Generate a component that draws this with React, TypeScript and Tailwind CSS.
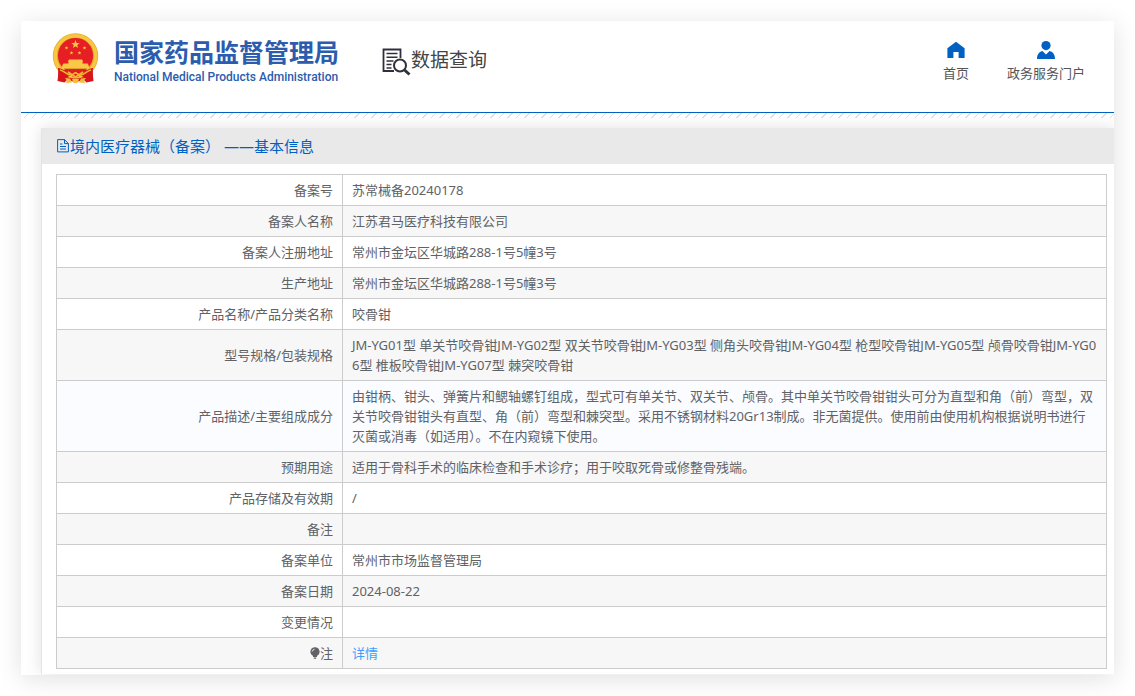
import type { ReactNode } from "react";

type Row = { label: ReactNode; value: ReactNode; tone: string };

const PLAIN = "bg-white";
const STRIPE = "bg-[#f7f7f7]";

const rows: Row[] = [
  { label: "备案号", value: "苏常械备20240178", tone: PLAIN },
  { label: "备案人名称", value: "江苏君马医疗科技有限公司", tone: STRIPE },
  { label: "备案人注册地址", value: "常州市金坛区华城路288-1号5幢3号", tone: PLAIN },
  { label: "生产地址", value: "常州市金坛区华城路288-1号5幢3号", tone: STRIPE },
  { label: "产品名称/产品分类名称", value: "咬骨钳", tone: PLAIN },
  {
    label: "型号规格/包装规格",
    value:
      "JM-YG01型 单关节咬骨钳JM-YG02型 双关节咬骨钳JM-YG03型 侧角头咬骨钳JM-YG04型 枪型咬骨钳JM-YG05型 颅骨咬骨钳JM-YG06型 椎板咬骨钳JM-YG07型 棘突咬骨钳",
    tone: STRIPE,
  },
  {
    label: "产品描述/主要组成成分",
    value:
      "由钳柄、钳头、弹簧片和鳃轴螺钉组成，型式可有单关节、双关节、颅骨。其中单关节咬骨钳钳头可分为直型和角（前）弯型，双关节咬骨钳钳头有直型、角（前）弯型和棘突型。采用不锈钢材料20Gr13制成。非无菌提供。使用前由使用机构根据说明书进行灭菌或消毒（如适用）。不在内窥镜下使用。",
    tone: "bg-[#fafcff]",
  },
  { label: "预期用途", value: "适用于骨科手术的临床检查和手术诊疗；用于咬取死骨或修整骨残端。", tone: STRIPE },
  { label: "产品存储及有效期", value: "/", tone: PLAIN },
  { label: "备注", value: "", tone: STRIPE },
  { label: "备案单位", value: "常州市市场监督管理局", tone: PLAIN },
  { label: "备案日期", value: "2024-08-22", tone: STRIPE },
  { label: "变更情况", value: "", tone: PLAIN },
  {
    label: (
      <span className="inline-flex items-center align-top">
        <BulbIcon />注
      </span>
    ),
    value: (
      <a href="#detail" className="text-[#409eff]">
        详情
      </a>
    ),
    tone: STRIPE,
  },
];

const STAR = "M0-5 1.2-1.6 4.8-1.5 1.9.6 2.9 4 0 2-2.9 4-1.9.6-4.8-1.5-1.2-1.6Z";

function Emblem() {
  return (
    <svg viewBox="0 0 47 51" className="h-[51px] w-[47px]" aria-hidden="true">
      <path d="M7 34 5.5 48l7 1.5 3-3 8 3 8-3 3 3 7-1.5L40 34Z" fill="#d8151b" />
      <circle cx="23.5" cy="23" r="22.7" fill="#e8a823" />
      <circle cx="23.5" cy="23" r="20.3" fill="none" stroke="#f5c843" strokeWidth="3.4" />
      <circle cx="23.5" cy="22.5" r="17.6" fill="#e71f24" />
      <g fill="#f9c846">
        <path d={STAR} transform="translate(23.5 11.5) scale(.88)" />
        <path d={STAR} transform="translate(14.5 15) scale(.4)" />
        <path d={STAR} transform="translate(32.5 15) scale(.4)" />
        <path d={STAR} transform="translate(19.5 20) scale(.4)" />
        <path d={STAR} transform="translate(27.5 20) scale(.4)" />
        <path d="M17 26.5h13l1.3 2.2H15.7ZM16.5 28.7h14v2.500h-14ZM10.5 32l1-1.500h24l1 1.500 1 4h-28Z" />
      </g>
      <path d="M12 35.5h23" stroke="#dc8f20" strokeWidth=".7" />
      <path d="M10 37h27l-5 4H15Z" fill="#e02020" />
      <path d="M6 35c5 0 8 6 13 5l4.5-2.500L28 40c5 1 8-5 13-5l-.5 9-6.500 1.500-5-3-5.500 2-5.500-2-5 3L6.500 44Z" fill="#d8151b" />
      <path d="M8 37c5 1 7 6 12 5l3.500-2.500L27 42c5 1 7-4 12-5M16 39l7.500 5 7.500-5" fill="none" stroke="#f0b62f" strokeWidth="1.6" />
      <path d="m13 45 5 .5 2 4-6 .5 1-2.500ZM34 45l-5 .5-2 4 6 .5-1-2.500ZM20 46h7l-1.500 4h-4Z" fill="#f3be3a" />
    </svg>
  );
}

function QueryIcon() {
  return (
    <svg viewBox="0 0 29 28" className="h-7 w-[29px] shrink-0" fill="none" stroke="#30303c" aria-hidden="true">
      <path d="M12 23H1.500V1.500h17V10" strokeWidth="1.8" />
      <path d="M4.500 5.500h11M4.500 9.200h11M4.500 13h7M4.500 16.600h5M4.500 20h5" strokeWidth="1.5" />
      <circle cx="18" cy="17.5" r="6" strokeWidth="2" />
      <path d="m22.500 22 5 4.500" strokeWidth="3" />
    </svg>
  );
}

function HomeIcon() {
  return (
    <svg viewBox="0 0 18 18" className="size-[18px]" fill="#0061c2" aria-hidden="true">
      <path d="M9 .8.400 7.200V17h6v-6h5.200v6h6V7.200Z" />
    </svg>
  );
}

function UserIcon() {
  return (
    <svg viewBox="0 0 18 18" className="size-[18px]" fill="#0061c2" aria-hidden="true">
      <circle cx="9" cy="4.6" r="4.6" />
      <path d="M0 18c0-4 1.500-7 5.500-8L9 13.500 12.500 10c4 1 5.500 4 5.500 8Z" />
    </svg>
  );
}

function DocIcon() {
  return (
    <svg viewBox="0 0 12 14" className="h-3.5 w-3 shrink-0" fill="none" stroke="#0061c2" aria-hidden="true">
      <path d="M.6.600H7.500l3.900 4v8.300H.6ZM7.500.600v4h3.900M3 5h2.500M3 7.500h6M3 10h6" />
    </svg>
  );
}

function BulbIcon() {
  return (
    <svg viewBox="0 0 10 12" className="h-3 w-2.5" aria-hidden="true">
      <circle cx="5" cy="4.8" r="4.6" fill="#606266" />
      <path d="M3 9h4v1H3ZM3.800 10.600h2.400v1.200H3.800Z" fill="#606266" />
      <path d="M2.200 4.500a3 3 0 0 1 2.300-2.300" fill="none" stroke="#e8e8e8" />
    </svg>
  );
}

function NavLink({ href, icon, children }: { href: string; icon: ReactNode; children: ReactNode }) {
  return (
    <a href={href} className="flex flex-col items-center gap-1 text-[13px] leading-5 text-[#555]">
      {icon}
      {children}
    </a>
  );
}

export default function App() {
  return (
    <div className="bg-white p-[21px] font-['Noto_Sans','Noto_Sans_CJK_SC',sans-serif] text-[#606266]">
      <div className="overflow-hidden bg-white pb-px shadow-[0_4px_24px_rgba(0,0,0,0.12)]">
        <header className="flex items-start justify-between pr-[29px] pb-[25px] pl-[31px]">
          <div className="flex items-start pt-3">
            <Emblem />
            <div className="ml-[15px] pt-0.5 text-[#2b5cad]">
              <h1 className="font-['Noto_Sans_CJK_SC',sans-serif] text-[25px] leading-8 font-bold whitespace-nowrap">
                国家药品监督管理局
              </h1>
              <p className="font-[Roboto,sans-serif] text-[12px] leading-5 font-medium whitespace-nowrap">
                National Medical Products Administration
              </p>
            </div>
            <div className="ml-[43px] flex items-start pt-[15px] text-[#444]">
              <QueryIcon />
              <span className="text-[19px] leading-6 whitespace-nowrap">数据查询</span>
            </div>
          </div>
          <nav className="flex gap-[38px] pt-5">
            <NavLink href="#home" icon={<HomeIcon />}>
              首页
            </NavLink>
            <NavLink href="#portal" icon={<UserIcon />}>
              政务服务门户
            </NavLink>
          </nav>
        </header>
        <div className="h-1.5 border-t border-[#0061c2] bg-[repeating-linear-gradient(135deg,#ffffff_0px,#ffffff_5px,#e0e0e4_5px,#e0e0e4_6px)]" />
        <main className="mt-2.5 ml-5 border-l border-[#e4e4e4] shadow-[0_0_16px_rgba(0,0,0,0.12)]">
          <h2 className="flex h-9 items-center gap-px bg-[#e9e9e9] px-[15px] text-[15px] leading-5 text-[#0061c2]">
            <DocIcon />
            境内医疗器械（备案） ——基本信息
          </h2>
          <div className="pt-2.5 pr-[7px] pb-[5px] pl-3.5">
            <table className="w-full table-fixed border-collapse border border-[#ccccd0] text-[13px] leading-5">
              <tbody>
                {rows.map((row, i) => (
                  <tr key={i} className={row.tone}>
                    <th scope="row" className="w-[286px] border border-[#cccccc] px-[9px] py-[5px] text-right font-normal">
                      {row.label}
                    </th>
                    <td className="border border-[#cccccc] px-[9px] py-[5px] break-all">{row.value}</td>
                  </tr>
                ))}
              </tbody>
            </table>
          </div>
        </main>
      </div>
    </div>
  );
}
